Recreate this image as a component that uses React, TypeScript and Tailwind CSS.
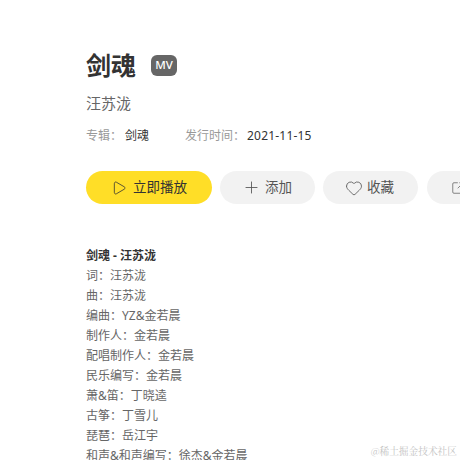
import { Heart, Plus, Play, SquareArrowOutUpRight } from "lucide-react";

const lyrics = [
  "词：汪苏泷",
  "曲：汪苏泷",
  "编曲：YZ&金若晨",
  "制作人：金若晨",
  "配唱制作人：金若晨",
  "民乐编写：金若晨",
  "萧&笛：丁晓逵",
  "古筝：丁雪儿",
  "琵琶：岳江宇",
  "和声&和声编写：徐杰&金若晨",
];

export default function App() {
  return (
    <div className="relative h-[460px] w-[460px] overflow-hidden bg-white pl-[86px] font-['Noto_Sans','Noto_Sans_CJK_SC',sans-serif] text-[#333]">
      <div className="flex items-center pt-[46px]">
        <h1 className="text-[25px] leading-[38px] font-bold">剑魂</h1>
        <span className="ml-[15px] flex h-[21px] w-[26px] items-center justify-center rounded-[6px] bg-[#666] text-[11.5px] leading-none font-medium text-white">
          MV
        </span>
      </div>
      <div className="mt-[7px] text-[15px] leading-[24px] text-[#666]">汪苏泷</div>
      <div className="mt-[11px] flex items-center text-[12px] leading-[20px]">
        <span className="text-[#999]">专辑：</span>
        <span className="ml-[3px]">剑魂</span>
        <span className="ml-[36px] text-[#999]">发行时间：</span>
        <span className="ml-[2px] tracking-[0.2px]">2021-11-15</span>
      </div>
      <div className="mt-[25px] flex gap-[8px]">
        <button className="flex h-[33px] w-[126px] shrink-0 items-center gap-[6px] rounded-full bg-[#ffde27] pl-[25px] text-[13.5px]">
          <Play size={16} strokeWidth={1.2} />
          立即播放
        </button>
        <button className="flex h-[33px] w-[95px] shrink-0 items-center gap-[4px] rounded-full bg-[#f2f2f2] pl-[22px] text-[13.5px] text-[#555]">
          <Plus size={19} strokeWidth={1.1} />
          添加
        </button>
        <button className="flex h-[33px] w-[95px] shrink-0 items-center gap-[4px] rounded-full bg-[#f2f2f2] pl-[22px] text-[13.5px] text-[#555]">
          <Heart size={18} strokeWidth={1.1} />
          收藏
        </button>
        <button className="ml-px flex h-[33px] w-[95px] shrink-0 items-center rounded-full bg-[#f2f2f2] pl-[24px] text-[#555]">
          <SquareArrowOutUpRight size={14} strokeWidth={1.2} />
        </button>
      </div>
      <div className="mt-[42px] text-[12px] leading-[20px] text-[#666]">
        <div className="font-bold text-[#333]">剑魂 - 汪苏泷</div>
        {lyrics.map((line) => (
          <div key={line}>{line}</div>
        ))}
      </div>
      <div className="absolute right-[3px] bottom-[1px] font-['Noto_Serif_CJK_SC','Noto_Sans_CJK_SC',serif] text-[9.7px] leading-[16px] text-[#c4c4c4]">
        @稀土掘金技术社区
      </div>
    </div>
  );
}
